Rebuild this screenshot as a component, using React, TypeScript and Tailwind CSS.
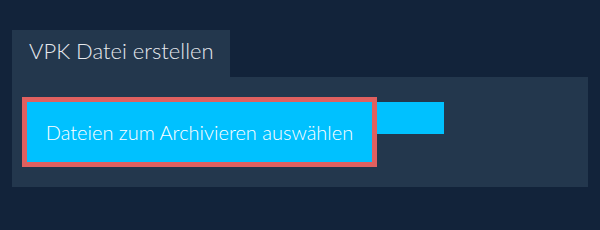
export default function App() {
  return (
    <div className="w-[600px] h-[230px] bg-[#12233a] pt-[30px] px-3 font-['Lato','Liberation_Sans',sans-serif] font-light">
      <div className="w-[218px] h-[47px] bg-[#23374d] flex items-center pl-[17px] pb-[6px] text-[22px] text-[#e6e9ed]">
        VPK Datei erstellen
      </div>
      <div className="bg-[#23374d] h-[110px] pt-5 px-[10px] flex items-start">
        <button className="w-[355px] h-[70px] border-[5px] border-[#e0605f] bg-[#00c1ff] text-white text-[20px] flex items-center justify-center">
          Dateien zum Archivieren auswählen
        </button>
        <div className="w-[67px] h-8 mt-[5px] bg-[#00c1ff]" />
      </div>
    </div>
  );
}
